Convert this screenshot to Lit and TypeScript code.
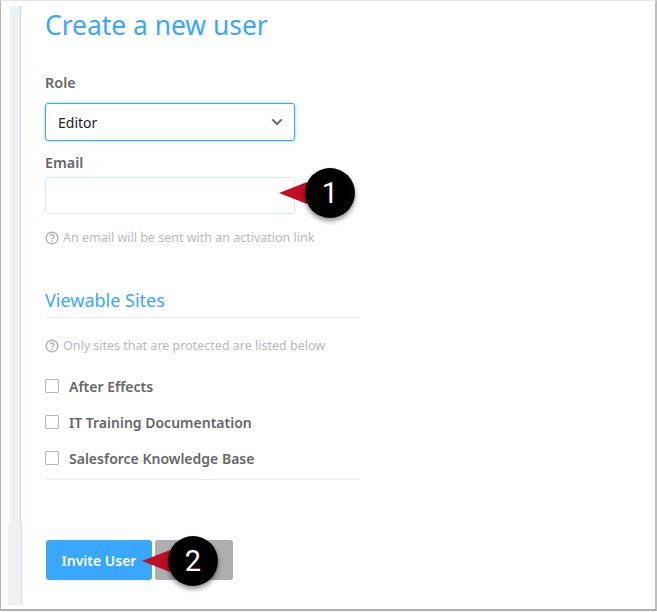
import { LitElement, html, css, svg } from "lit";
import { customElement } from "lit/decorators.js";

const sites = ["After Effects", "IT Training Documentation", "Salesforce Knowledge Base"];

const helpIcon = svg`<svg class="help-icon" viewBox="0 0 14 14" width="14" height="14" aria-hidden="true">
    <circle cx="7" cy="7" r="5.8" fill="none" stroke="currentColor" stroke-width="1.3"/>
    <path d="M5.1 5.6a1.9 1.9 0 1 1 2.9 1.6c-.7.4-1 .7-1 1.4" fill="none" stroke="currentColor" stroke-width="1.3"/>
    <circle cx="7" cy="10.3" r=".85" fill="currentColor"/>
</svg>`;

@customElement("app-root")
export class AppRoot extends LitElement {
    renderCallout(cls: string, label: string) {
        return html`<div class="callout ${cls}">
            <svg class="arrow" viewBox="0 0 28 22" width="28" height="22" aria-hidden="true">
                <path d="M0 11 L28 0 L28 22 Z" fill="#c10e22"/>
            </svg>
            <span class="bubble">${label}</span>
        </div>`;
    }

    render() {
        return html`<div class="frame">
            <div class="rail">
                <div class="rail-top"></div>
                <div class="rail-bottom"></div>
            </div>
            <main class="content">
                <h1>Create a new user</h1>
                <label class="field-label role-label">Role</label>
                <div class="select">
                    <span>Editor</span>
                    <svg viewBox="0 0 12 8" width="12" height="8" aria-hidden="true">
                        <path d="M1.2 1.4 L6 6 L10.8 1.4" fill="none" stroke="#666" stroke-width="2"/>
                    </svg>
                </div>
                <label class="field-label email-label">Email</label>
                <div class="input"></div>
                <p class="hint email-hint">${helpIcon}An email will be sent with an activation link</p>
                <section class="sites">
                    <h2>Viewable Sites</h2>
                    <p class="hint sites-hint">${helpIcon}Only sites that are protected are listed below</p>
                    <ul>
                        ${sites.map(
                            (site) => html`<li><span class="checkbox"></span>${site}</li>`
                        )}
                    </ul>
                </section>
                <div class="actions">
                    <button class="primary">Invite User</button>
                    <button class="secondary"></button>
                </div>
            </main>
            ${this.renderCallout("callout-one", "1")}
            ${this.renderCallout("callout-two", "2")}
        </div>`;
    }

    static styles = css`
        * {
            box-sizing: border-box;
            margin: 0;
            padding: 0;
        }

        :host {
            display: block;
            width: 657px;
            height: 612px;
            background: #fff;
            font-family: "Noto Sans", sans-serif;
        }

        .frame {
            position: relative;
            display: flex;
            width: 657px;
            height: 611px;
            background: #fff;
            border-top: 1px solid #e4e4e4;
            border-left: 1px solid #b4b4b4;
            border-right: 2px solid #bdbdbd;
            border-bottom: 2px solid #b0b0b0;
        }

        .rail {
            display: flex;
            flex-direction: column;
            align-items: flex-end;
            width: 20px;
            flex: none;
            padding-top: 5px;
        }

        .rail-top {
            width: 11px;
            height: 518px;
            background: #edf1f4;
            border-right: 1px solid #c9d6e2;
        }

        .rail-bottom {
            width: 14px;
            flex: 1;
            margin-right: -1px;
            margin-bottom: 4px;
            background: #edf1f4;
            border-right: 1px solid #d6dde3;
        }

        .content {
            flex: 1;
            padding-left: 24px;
        }

        h1 {
            margin-top: 6px;
            font-size: 26.4px;
            line-height: 36px;
            font-weight: 400;
            color: #39a7fb;
        }

        .field-label {
            display: block;
            font-size: 14.4px;
            line-height: 20px;
            font-weight: 600;
            color: #666;
        }

        .role-label {
            margin-top: 30px;
        }

        .select {
            display: flex;
            align-items: center;
            justify-content: space-between;
            width: 250px;
            height: 38px;
            margin-top: 10px;
            padding: 0 11px 0 12px;
            border: 1px solid #39a7fb;
            border-radius: 3px;
            box-shadow: 0 0 3px rgba(57, 167, 251, 0.6);
            font-size: 14px;
            color: #222;
        }

        .email-label {
            margin-top: 12px;
        }

        .input {
            width: 250px;
            height: 37px;
            margin-top: 4px;
            border: 1px solid #d3e9fa;
            border-radius: 3px;
        }

        .hint {
            display: flex;
            align-items: center;
            gap: 4px;
            font-size: 12.5px;
            line-height: 18px;
            color: #b9b9bd;
        }

        .help-icon {
            color: #a9a9ad;
            flex: none;
        }

        .email-hint {
            margin-top: 15px;
        }

        .sites {
            width: 315px;
            margin-top: 40px;
        }

        h2 {
            padding-bottom: 4px;
            border-bottom: 1px solid #eaeaea;
            font-size: 18px;
            line-height: 26px;
            font-weight: 400;
            color: #39a7fb;
        }

        .sites-hint {
            margin-top: 19px;
        }

        ul {
            margin-top: 13px;
            padding-bottom: 3px;
            border-bottom: 1px solid #eaeaea;
            list-style: none;
        }

        li {
            display: flex;
            align-items: center;
            gap: 10px;
            height: 36px;
            font-size: 14px;
            font-weight: 600;
            color: #666;
        }

        .checkbox {
            width: 14px;
            height: 14px;
            border: 1px solid #b5b5b5;
            border-radius: 2px;
            flex: none;
        }

        .actions {
            display: flex;
            gap: 3px;
            margin-top: 60px;
            margin-left: 1px;
        }

        button {
            height: 40px;
            border: none;
            border-radius: 3px;
            font: inherit;
        }

        .primary {
            width: 106px;
            background: #39a7fb;
            color: #fff;
            font-size: 14px;
            font-weight: 600;
        }

        .secondary {
            width: 78px;
            background: #adadb2;
        }

        .callout {
            position: absolute;
            display: flex;
            align-items: center;
        }

        .callout-one {
            left: 278px;
            top: 167px;
        }

        .callout-two {
            left: 141px;
            top: 535px;
        }

        .arrow {
            margin-right: -2px;
        }

        .bubble {
            position: relative;
            display: flex;
            align-items: center;
            justify-content: center;
            width: 50px;
            height: 50px;
            border-radius: 50%;
            background: #000;
            box-shadow: 0 3px 5px rgba(0, 0, 0, 0.45);
            color: #fff;
            font-family: Roboto, sans-serif;
            font-size: 29px;
            font-weight: 400;
        }
    `;
}
